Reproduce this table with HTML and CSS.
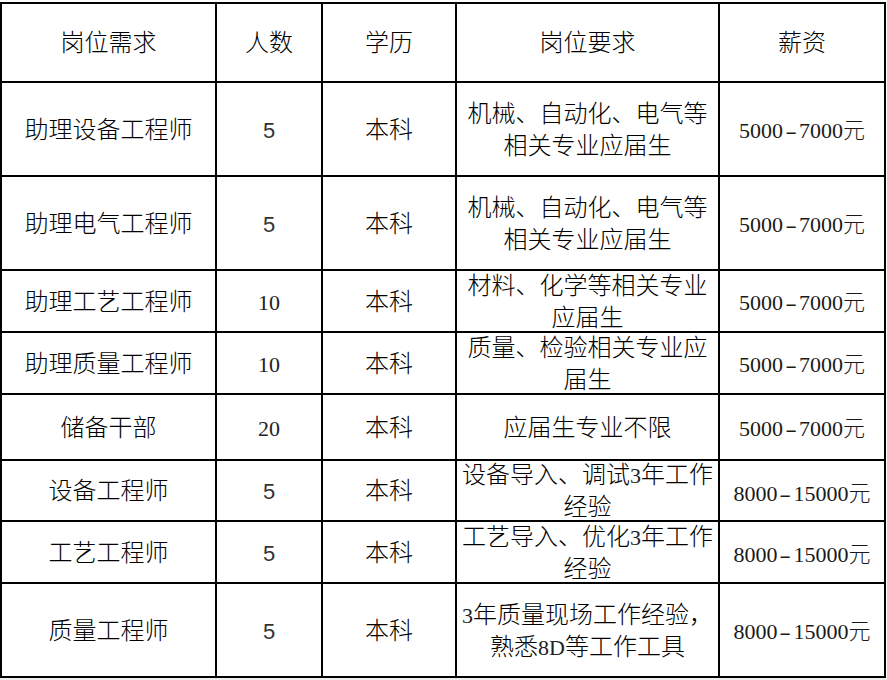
FILE: index.html
```html
<!DOCTYPE html>
<html lang="zh-CN">
<head>
<meta charset="utf-8">
<title>岗位需求</title>
<link rel="stylesheet" href="styles.css">
</head>
<body>
<div class="page">
  <div class="table">
    <div class="cell">岗位需求</div>
    <div class="cell">人数</div>
    <div class="cell">学历</div>
    <div class="cell">岗位要求</div>
    <div class="cell">薪资</div>

    <div class="cell">助理设备工程师</div>
    <div class="cell sans">5</div>
    <div class="cell">本科</div>
    <div class="cell req"><p class="t">机械、自动化、电气等<br>相关专业应届生</p></div>
    <div class="cell pay"><p class="t">5000<span class="dash">-</span>7000元</p></div>

    <div class="cell">助理电气工程师</div>
    <div class="cell sans">5</div>
    <div class="cell">本科</div>
    <div class="cell req"><p class="t">机械、自动化、电气等<br>相关专业应届生</p></div>
    <div class="cell pay"><p class="t">5000<span class="dash">-</span>7000元</p></div>

    <div class="cell">助理工艺工程师</div>
    <div class="cell num">10</div>
    <div class="cell">本科</div>
    <div class="cell req"><p class="t">材料、化学等相关专业<br>应届生</p></div>
    <div class="cell pay"><p class="t">5000<span class="dash">-</span>7000元</p></div>

    <div class="cell">助理质量工程师</div>
    <div class="cell num">10</div>
    <div class="cell">本科</div>
    <div class="cell req"><p class="t">质量、检验相关专业应<br>届生</p></div>
    <div class="cell pay"><p class="t">5000<span class="dash">-</span>7000元</p></div>

    <div class="cell">储备干部</div>
    <div class="cell num">20</div>
    <div class="cell">本科</div>
    <div class="cell req"><p class="t">应届生专业不限</p></div>
    <div class="cell pay"><p class="t">5000<span class="dash">-</span>7000元</p></div>

    <div class="cell">设备工程师</div>
    <div class="cell sans">5</div>
    <div class="cell">本科</div>
    <div class="cell req"><p class="t">设备导入、调试<span class="d">3</span>年工作<br>经验</p></div>
    <div class="cell pay low"><p class="t">8000<span class="dash">-</span>15000元</p></div>

    <div class="cell">工艺工程师</div>
    <div class="cell sans">5</div>
    <div class="cell">本科</div>
    <div class="cell req"><p class="t">工艺导入、优化<span class="d">3</span>年工作<br>经验</p></div>
    <div class="cell pay low"><p class="t">8000<span class="dash">-</span>15000元</p></div>

    <div class="cell">质量工程师</div>
    <div class="cell sans">5</div>
    <div class="cell">本科</div>
    <div class="cell req"><p class="t"><span class="d">3</span>年质量现场工作经验，<br>熟悉<span class="d">8D</span>等工作工具</p></div>
    <div class="cell pay"><p class="t">8000<span class="dash">-</span>15000元</p></div>
  </div>
  <div class="rest"></div>
</div>
</body>
</html>
```
FILE: styles.css
```css
html, body {
  margin: 0;
  padding: 0;
  background: #fff;
}
.page {
  width: 887px;
  height: 680px;
  display: flex;
  flex-direction: column;
  padding-top: 2px;
  box-sizing: border-box;
  overflow: hidden;
}
.table {
  display: grid;
  width: 886px;
  box-sizing: border-box;
  grid-template-columns: 213px 104px 132px 261px 164px;
  grid-template-rows: 77px 92px 92px 60px 60px 64px 59px 60px 92px;
  gap: 2px;
  padding: 2px;
  background: #000;
  flex: none;
}
.rest {
  flex: 1;
  background: #ececec;
}
.cell {
  background: #fff;
  display: flex;
  align-items: center;
  justify-content: center;
  text-align: center;
  font-family: "Liberation Serif", "Noto Sans CJK SC", serif;
  font-size: 24px;
  font-weight: 300;
  color: #000;
  line-height: 31.6px;
  white-space: nowrap;
  padding-top: 3px;
}
.t {
  margin: 0;
}
.sans {
  font-family: "Liberation Sans", sans-serif;
  font-size: 22px;
  font-weight: 400;
  color: #333;
}
.num {
  font-size: 22px;
  font-weight: 400;
  color: #222;
}
.d {
  font-size: 22px;
  font-weight: 400;
  color: #222;
}
.pay {
  font-size: 22px;
  padding-top: 4px;
  color: #1a1a1a;
}
.pay.low {
  padding-top: 6px;
}
.dash {
  display: inline-block;
  width: 16px;
  text-align: center;
  transform: scaleX(1.6);
  font-weight: 400;
}
```
